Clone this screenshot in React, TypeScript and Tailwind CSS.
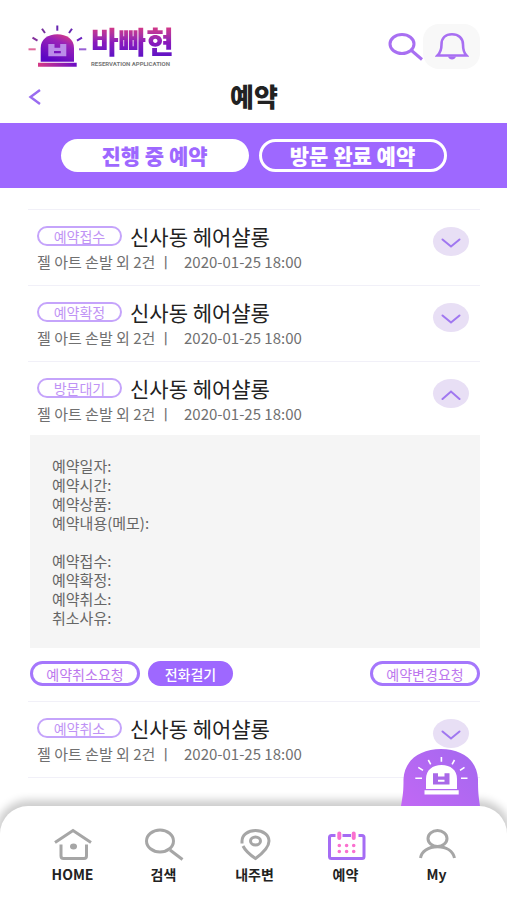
import { useState, type ReactNode } from "react";

type Booking = { id: number; status: string };

const bookings: Booking[] = [
  { id: 1, status: "예약접수" },
  { id: 2, status: "예약확정" },
  { id: 3, status: "방문대기" },
  { id: 4, status: "예약취소" },
];

function SirenLogo() {
  return (
    <svg width="60" height="44" viewBox="0 0 60 44" aria-hidden="true">
      <defs>
        <linearGradient id="dome" x1="0.9" y1="0" x2="0.4" y2="1">
          <stop offset="0" stopColor="#e0407c" />
          <stop offset="0.35" stopColor="#9a22b8" />
          <stop offset="1" stopColor="#5b06c4" />
        </linearGradient>
        <linearGradient id="base" x1="0" y1="0" x2="1" y2="0">
          <stop offset="0" stopColor="#d63a86" />
          <stop offset="1" stopColor="#6a0cc6" />
        </linearGradient>
      </defs>
      <path d="M12.7 36.7V23C12.7 14 20 9.3 29.3 9.3S46 14 46 23V36.7Z" fill="url(#dome)" />
      <path d="M10 37.7H48.7V41.7H10Z" fill="url(#base)" />
      <path
        d="M20.3 19H26.5V22.8H32.2V19H38.3V31.3H20.3ZM26 26H32.8V28.2H26Z"
        fill="#bb8ce9"
        fillRule="evenodd"
      />
      <g strokeWidth="2" fill="none">
        <path d="M0.5 24.3H7.7" stroke="#e06a9c" />
        <path d="M4.5 12.7L9.5 15.7" stroke="#84309c" />
        <path d="M14 3.7L17 8" stroke="#76309c" />
        <path d="M29.3 0.5V5.7" stroke="#6624b0" />
        <path d="M44 3.7L41 8" stroke="#6624b0" />
        <path d="M54 12.7L49 15.6" stroke="#6c22c0" />
        <path d="M51 24.3H58.3" stroke="#9860d4" />
      </g>
    </svg>
  );
}

function SearchIcon() {
  return (
    <svg width="35" height="30" viewBox="0 0 35 30" fill="none" stroke="#a86ff2" strokeWidth="3" aria-hidden="true">
      <ellipse cx="14" cy="12" rx="12" ry="9.5" />
      <path d="M23.5 18.5L34 27.5" />
    </svg>
  );
}

function BellIcon() {
  return (
    <svg width="34" height="30" viewBox="0 0 34 30" fill="none" stroke="#a86ff2" strokeWidth="2.6" aria-hidden="true">
      <path d="M2.5 23.5H31.5C28.5 20.5 28 18 28 12.5C28 6 23.5 2.3 17 2.3S6.500 6 6.500 12.500C6.500 18 5.500 20.500 2.500 23.500Z" />
      <path d="M13 24.500C14 28.500 20 28.500 21 24.500Z" fill="#a86ff2" stroke="none" />
    </svg>
  );
}

function Chevron({ up }: { up: boolean }) {
  return (
    <svg width="20" height="10" viewBox="0 0 20 10" fill="none" stroke="#a077f0" strokeWidth="2" strokeLinecap="round" aria-hidden="true">
      <path d={up ? "M1.500 9L10 1.500L18.500 9" : "M1.500 1.500L10 8.500L18.500 1.500"} />
    </svg>
  );
}

function NavIcon({ color, children }: { color: string; children: ReactNode }) {
  return (
    <svg width="40" height="36" viewBox="0 0 40 36" fill="none" stroke={color} strokeWidth="3" aria-hidden="true">
      {children}
    </svg>
  );
}

const navItems = [
  {
    label: "HOME",
    icon: (
      <NavIcon color="#a6a6a6">
        <path d="M2 16.500L20 4.500L38 16.500" />
        <path d="M8 18.500V30Q8 32.500 10.500 32.500H31Q33.500 32.500 33.500 30V18.500" />
        <ellipse cx="20.500" cy="20.500" rx="3.500" ry="3" fill="#a6a6a6" stroke="none" />
      </NavIcon>
    ),
  },
  {
    label: "검색",
    icon: (
      <NavIcon color="#a6a6a6">
        <ellipse cx="16" cy="15" rx="13.500" ry="11" />
        <path d="M26 24L38.500 33.500" />
      </NavIcon>
    ),
  },
  {
    label: "내주변",
    icon: (
      <NavIcon color="#a6a6a6">
        <path d="M7 17.500V15C7 9 13 4.500 20.500 4.500S34 9 34 15C34 21 28 27 20.500 32.500C14.500 28.500 10 24 8 20" />
        <ellipse cx="20.500" cy="15" rx="5" ry="4" />
      </NavIcon>
    ),
  },
  {
    label: "예약",
    icon: (
      <NavIcon color="#a56cf4">
        <path d="M9.500 9.500H5.500Q3.500 9.500 3.500 11.500V30.500Q3.500 32.500 5.500 32.500H36Q38 32.500 38 30.500V11.500Q38 9.500 36 9.500H32.500M16.500 9.500H25" />
        <path d="M13.300 7.500V12M27.700 7.500V12" stroke="#fa70cf" strokeWidth="4" strokeLinecap="round" />
        <path d="M13.300 19.500h.01M20.600 19.500h.01M27.700 19.500h.01M13.300 25.500h.01M20.600 25.500h.01M27.700 25.500h.01" stroke="#fa70cf" strokeWidth="3.600" strokeLinecap="round" />
      </NavIcon>
    ),
  },
  {
    label: "My",
    icon: (
      <NavIcon color="#a6a6a6">
        <ellipse cx="20.500" cy="12.500" rx="9.500" ry="8" />
        <path d="M3.500 32C4.500 25.500 11 20.800 20.500 20.800S36 25.500 37.500 32" />
      </NavIcon>
    ),
  },
];

function CallButton() {
  return (
    <button type="button" aria-label="호출" className="absolute right-[27px] bottom-full block">
      <svg width="79" height="57" viewBox="0 0 79 57" className="block" aria-hidden="true">
        <defs>
          <linearGradient id="call" x1="0" y1="1" x2="1" y2="0.200">
            <stop offset="0" stopColor="#c168f4" />
            <stop offset="1" stopColor="#a668f0" />
          </linearGradient>
        </defs>
        <path d="M0 57C2 46 2.500 42 2.500 30C3.500 11 19 0 40 0S76 11 77 30C77 42 77.500 47 79 57Z" fill="url(#call)" />
        <path d="M25 40V30C25 21 31.500 16 40.500 16S56 21 56 30V40ZM23.500 41.300H57.700V45.500H23.500Z" fill="#fff" />
        <path d="M32 24.300H37V27.500H43.500V24.300H48.500V35.500H32ZM37 30.700H43.500V32.700H37Z" fill="#a968e8" fillRule="evenodd" />
        <path
          d="M14.300 29.300H21M60 29.300H66.500M17.300 18.300L22 21.300M63.500 18.300L59 21.300M27.300 11L29.700 15.300M53.500 11L51.100 15.300M40.400 8V12.700"
          stroke="#fff"
          strokeWidth="1.600"
        />
      </svg>
    </button>
  );
}

function BookingDetail() {
  return (
    <>
      <div className="ml-0.5 bg-[#f5f5f5] px-[22px] py-[21px] text-[15px] leading-[19px] text-[#666]">
        <p>예약일자:</p>
        <p>예약시간:</p>
        <p>예약상품:</p>
        <p>예약내용(메모):</p>
        <p className="mt-[19px]">예약접수:</p>
        <p>예약확정:</p>
        <p>예약취소:</p>
        <p>취소사유:</p>
      </div>
      <div className="ml-0.5 flex gap-2 pt-[13px] pb-[15px] text-sm leading-none">
        <button type="button" className="h-[25px] w-[110px] rounded-full border-[3px] border-[#a577fc] text-[#bd78ee]">
          예약취소요청
        </button>
        <button type="button" className="h-[25px] w-[85px] rounded-full bg-[#9e68ff] font-medium text-white">
          전화걸기
        </button>
        <button type="button" className="ml-auto h-[25px] w-[110px] rounded-full border-[3px] border-[#a577fc] text-[#bd78ee]">
          예약변경요청
        </button>
      </div>
    </>
  );
}

function BookingRow({ booking, open, onToggle }: { booking: Booking; open: boolean; onToggle: () => void }) {
  return (
    <li className="border-t border-[#f1f0f8]">
      <div className={`flex items-start justify-between pt-4 pr-[11px] pl-[9px] ${open ? "pb-[11px]" : "pb-[13px]"}`}>
        <div>
          <div className="flex h-5 items-center gap-2">
            <span className="flex h-5 w-[85px] items-center justify-center rounded-full border-2 border-[#c5a4fb] text-sm leading-none text-[#bf93f5]">
              {booking.status}
            </span>
            <h2 className="text-[21px] leading-[18px] text-[#222]">신사동 헤어샬롱</h2>
          </div>
          <p className="mt-1.5 flex text-[15px] leading-5 whitespace-pre text-[#707070]">
            <span className="w-[147px]">젤 아트 손발 외 2건 ㅣ</span>
            <time>2020-01-25 18:00</time>
          </p>
        </div>
        <button
          type="button"
          aria-expanded={open}
          aria-label="상세 보기"
          onClick={onToggle}
          className="mt-px flex h-[29px] w-9 items-center justify-center rounded-[50%] bg-[#e8dff5] pt-0.5"
        >
          <Chevron up={open} />
        </button>
      </div>
      {open && <BookingDetail />}
    </li>
  );
}

export default function App() {
  const [openId, setOpenId] = useState<number | null>(3);

  return (
    <div className="flex h-screen flex-col overflow-hidden bg-white font-['Noto_Sans_CJK_KR','Noto_Sans',sans-serif]">
      <header className="pr-[27px] pl-7 pt-6">
        <div className="flex h-[45px] items-center">
          <a href="#" className="flex items-center gap-[3px]">
            <SirenLogo />
            <span>
              <span className="block bg-linear-to-b from-[#e0357c] via-[#8a18bc] to-[#5408c8] bg-clip-text font-['Liberation_Sans','Noto_Sans_CJK_KR',sans-serif] text-[30px] leading-[35px] font-black text-transparent">
                바빠현
              </span>
              <span className="block font-[Roboto,sans-serif] text-[6px] leading-[8px] font-bold text-[#777]">
                RESERVATION APPLICATION
              </span>
            </span>
          </a>
          <button type="button" aria-label="검색" className="ml-auto">
            <SearchIcon />
          </button>
          <button type="button" aria-label="알림" className="flex h-[45px] w-[57px] items-center justify-center rounded-2xl bg-[#f8f8f8]">
            <BellIcon />
          </button>
        </div>
        <div className="grid h-[54px] grid-cols-[1fr_auto_1fr] items-center">
          <button type="button" aria-label="뒤로" className="justify-self-start">
            <svg width="14" height="18" viewBox="0 0 14 18" fill="none" stroke="#9a6cf0" strokeWidth="2.400" aria-hidden="true">
              <path d="M12 3L2.500 10L12 17" />
            </svg>
          </button>
          <h1 className="text-[26px] leading-8 font-black text-[#222]">예약</h1>
        </div>
      </header>

      <div className="flex justify-center gap-2.5 bg-[#9e68ff] px-7 py-4 text-[21px] leading-none font-black">
        <button type="button" className="h-[33px] w-[188px] rounded-full bg-white text-[#9e68ff]">
          진행 중 예약
        </button>
        <button type="button" className="h-[33px] w-[188px] rounded-full border-[3px] border-white text-white">
          방문 완료 예약
        </button>
      </div>

      <main className="min-h-0 flex-1 overflow-hidden pt-[21px] pr-[27px] pl-7">
        <ul className="border-b border-[#f1f0f8]">
          {bookings.map((b) => (
            <BookingRow
              key={b.id}
              booking={b}
              open={openId === b.id}
              onToggle={() => setOpenId(openId === b.id ? null : b.id)}
            />
          ))}
        </ul>
      </main>

      <nav className="relative rounded-t-[28px] bg-white pt-5 pr-[25px] pb-4 pl-[27px] shadow-[0_-2px_8px_4px_rgba(0,0,0,0.2)]">
        <CallButton />
        <ul className="grid grid-cols-5">
          {navItems.map((item) => (
            <li key={item.label}>
              <a href="#" className="flex flex-col items-center gap-0.5 text-sm leading-5 font-bold text-[#222]">
                {item.icon}
                {item.label}
              </a>
            </li>
          ))}
        </ul>
      </nav>
    </div>
  );
}
